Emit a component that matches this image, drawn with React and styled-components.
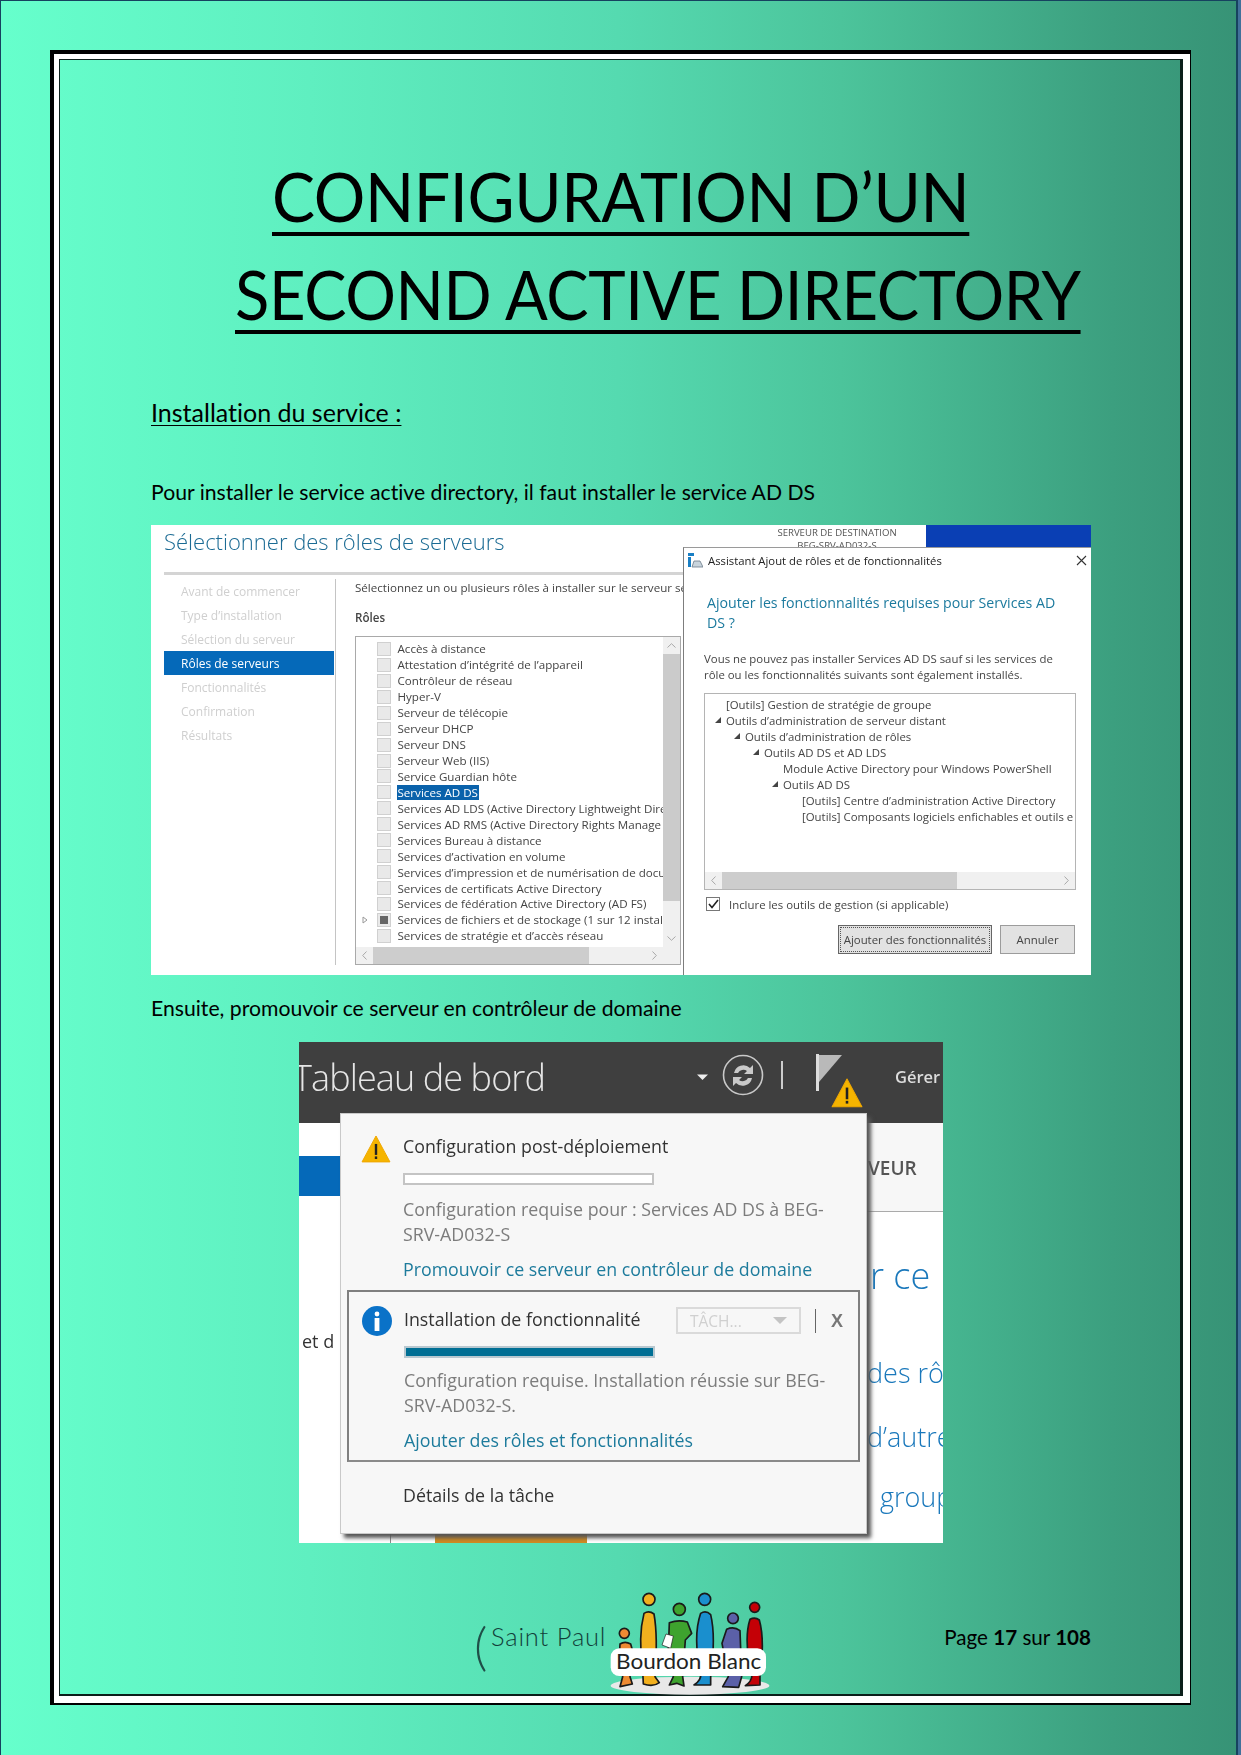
import React from "react";
import styled, { createGlobalStyle } from "styled-components";

const Global = createGlobalStyle`
  html, body { margin: 0; padding: 0; background: #41709a; }
  * { box-sizing: border-box; }
  #root { width: 1241px; height: 1755px; overflow: hidden; }
`;

const Sheet = styled.div`
  width: 1238px; height: 1755px;
  border-left: 1px solid #16425f; border-top: 1px solid #16425f; border-right: 2px solid #16425f;
  padding: 49px 0 0 49px;
  background: linear-gradient(90deg, #66ffcc 0%, #5fefc0 25%, #55dab0 50%, #4cc49b 68%, #3c9f7f 90%, #379376 100%);
  font-family: Lato, "Liberation Sans", sans-serif;
  font-variant-ligatures: none;
  color: #000;
`;
const FrameOuter = styled.div`
  width: 1141px; height: 1655px;
  border-style: solid; border-color: #000; border-width: 4px 1px 2px 4px;
`;
const FrameMid = styled.div`
  height: 100%;
  border-style: solid; border-color: #fff; border-width: 5px 7px 7px 5px;
`;
const FrameInner = styled.div`
  height: 100%;
  border-style: solid; border-color: #0b1f1a; border-width: 1px 3px 2px 1px;
  padding: 87px 89px 0 91px;
`;
const TitleLine = styled.h1`
  margin: 0; padding-left: ${p => p.$indent}px;
  font-weight: 400; font-size: 67px; line-height: 98px; white-space: nowrap;
`;
const TitleText = styled.span`
  display: inline-block; transform: scaleX(${p => p.$scale}); transform-origin: left center;
  letter-spacing: -0.4px;
  text-decoration: underline; text-decoration-thickness: 4px; text-underline-offset: 10px;
  text-decoration-skip-ink: none;
`;
const Subhead = styled.h2`
  margin: 54px 0 0; font-weight: 400; font-size: 25px; line-height: 30px;
  text-decoration: underline; text-decoration-thickness: 1px; text-underline-offset: 3px;
`;
const Para = styled.p`
  margin: ${p => p.$top}px 0 0; font-size: 21.2px; line-height: 24px; white-space: nowrap;
`;

/* first screenshot */
const ShotOne = styled.div`
  position: relative; margin-top: 21px; width: 940px; height: 450px; background: #fff; overflow: hidden;
  font-family: "Open Sans", sans-serif; font-size: 11.6px; color: #444; filter: blur(0.35px);
`;
const ShotHead = styled.div`display: flex; height: 47px; padding-left: 13px;`;
const ShotTitle = styled.div`
  font-size: 22px; font-weight: 300; color: #1b6b94; line-height: 32px; white-space: nowrap;
`;
const Destination = styled.div`
  margin-left: auto; width: 178px; padding-top: 1px; font-size: 9.6px; line-height: 13px; text-align: center; white-space: nowrap; color: #555;
`;
const BlueBand = styled.div`width: 165px; height: 22px; background: #0a3fb4;`;
const Rule = styled.div`height: 3px; margin: 0 0 0 13px; background: #d4d4d4;`;
const Columns = styled.div`display: flex; margin: 4px 0 0 13px;`;
const Nav = styled.div`width: 172px; height: 386px; border-right: 1px solid #c4c4c4; padding-right: 1px;`;
const NavItem = styled.div`
  height: 24px; padding: 2px 0 0 17px; line-height: 22px; font-size: 12px;
  color: ${p => (p.$active ? "#fff" : "#cfcfcf")}; background: ${p => (p.$active ? "#0569b9" : "transparent")};
`;
const Content = styled.div`padding-left: 19px; width: 345px;`;
const Intro = styled.div`line-height: 18px; white-space: nowrap; color: #444;`;
const RolesLabel = styled.div`margin-top: 12px; line-height: 18px; font-weight: 600; color: #444;`;
const ListBox = styled.div`
  margin-top: 9px; width: 326px; height: 329px; border: 1px solid #a9a9a9; display: grid;
  grid-template-columns: 1fr 17px; grid-template-rows: 1fr 17px;
`;
const ListRows = styled.div`padding-top: 4px; overflow: hidden;`;
const RoleRow = styled.div`display: flex; align-items: center; height: 15.95px; white-space: nowrap;`;
const Expander = styled.span`width: 20.5px; padding-left: 6px; display: flex; flex: none;`;
const Check = styled.span`
  flex: none; width: 14px; height: 14px; border: 1px solid #d0d0d0; background: #e9e9e9; margin-right: 6px; display: flex; align-items: center; justify-content: center;
  &::after { content: ""; width: ${p => (p.$partial ? 8 : 0)}px; height: ${p => (p.$partial ? 8 : 0)}px; background: #666; }
`;
const RoleText = styled.span`
  padding: 0 1px; color: ${p => (p.$sel ? "#fff" : "#444")}; background: ${p => (p.$sel ? "#0a62ab" : "transparent")};
`;
const VScroll = styled.div`background: #f0f0f0; display: flex; flex-direction: column; justify-content: space-between;`;
const VThumb = styled.div`height: 247px; margin-bottom: auto; background: #cbcbcb;`;
const HScroll = styled.div`background: #f0f0f0; display: flex; align-items: stretch; justify-content: space-between;`;
const HThumb = styled.div`width: ${p => p.$w}px; margin-right: auto; background: #cdcdcd;`;
const TreeScroll = styled(HScroll)`height: 17px; flex: none;`;
const Corner = styled.div`background: #f0f0f0;`;
const ChevronSlot = styled.span`
  flex: none; width: 17px; height: 17px; display: flex; align-items: center; justify-content: center;
  svg { transform: rotate(${p => p.$turn}deg); }
`;

/* dialog over the first screenshot */
const Dialog = styled.div`
  position: absolute; left: 532px; top: 22px; right: 0; bottom: 0; background: #fff;
  border-left: 1px solid #7d7d7d; border-top: 1px solid #9a9a9a; padding: 0 15px 0 20px;
`;
const DialogBar = styled.div`
  display: flex; align-items: center; gap: 5px; height: 24px; margin-left: -16px; margin-right: -11px; color: #222; font-size: 11.3px;
`;
const Close = styled.div`margin-left: auto; display: flex;`;
const DialogHeading = styled.div`
  margin-top: 21px; padding-left: 3px; font-size: 14.2px; line-height: 20px; color: #1c7a9e;
`;
const DialogText = styled.div`margin-top: 18px; line-height: 16px; font-size: 11.4px; color: #444; white-space: nowrap;`;
const Tree = styled.div`
  margin-top: 10px; height: 197px; border: 1px solid #b4b4b4; display: flex; flex-direction: column;
`;
const TreeRows = styled.div`flex: 1; padding-top: 2px; overflow: hidden;`;
const TreeRow = styled.div`
  display: flex; align-items: center; height: 16px; white-space: nowrap; margin-left: ${p => p.$level * 19}px; font-size: 11.4px; color: #444;
`;
const TreeArrow = styled.span`width: 21px; flex: none; padding-left: 9px; display: flex;`;
const DialogCheckRow = styled.div`display: flex; align-items: center; height: 16px; margin-top: 6px; padding-left: 2px; gap: 9px; font-size: 11.4px;`;
const TickBox = styled.span`
  width: 14px; height: 14px; border: 1px solid #777; display: flex; align-items: center; justify-content: center; background: #fff;
`;
const Buttons = styled.div`display: flex; justify-content: flex-end; gap: 8px; margin-top: 13px; padding-right: 1px;`;
const WinButton = styled.div`
  height: 29px; width: ${p => p.$w}px; display: flex; align-items: center; justify-content: center; white-space: nowrap;
  background: #e2e2e2; font-size: 11.4px; color: #444; border: 1px solid ${p => (p.$focus ? "#666" : "#9c9c9c")};
  outline: ${p => (p.$focus ? "1px dotted #555" : "none")}; outline-offset: -3px;
`;

/* second screenshot */
const ShotTwo = styled.div`
  position: relative; margin: 22px 0 0 148px; width: 644px; height: 501px; background: #fff; overflow: hidden;
  font-family: "Open Sans", sans-serif; filter: blur(0.35px);
`;
const DarkBar = styled.div`
  display: flex; align-items: center; height: 81px; background: #3f3f3f; color: #e4e4e4;
`;
const BoardTitle = styled.div`
  width: 397px; margin: 0 0 11px -6px; font-size: 36px; font-weight: 300; white-space: nowrap; color: #e6e6e6; letter-spacing: -0.9px;
`;
const BarIcons = styled.div`display: flex; align-items: center;`;
const Manage = styled.div`margin: 0 0 13px auto; font-size: 16.5px; font-weight: 600; white-space: nowrap; width: 48px; overflow: hidden; color: #ddd;`;
const Under = styled.div`display: flex; height: 420px;`;
const LeftSide = styled.div`width: 41px; padding-top: 33px; flex: none;`;
const BlueTab = styled.div`height: 40px; background: #0569b9;`;
const CutText = styled.div`margin-top: 133px; padding-left: 3px; line-height: 24px; font-size: 18px; color: #333; white-space: nowrap;`;
const MidSide = styled.div`flex: 1; display: flex; align-items: flex-end; padding-left: 50px;`;
const StripLine = styled.div`width: 1px; height: 9px; background: #888; margin-right: 44px;`;
const OrangeBar = styled.div`width: 152px; height: 9px; background: #cf8a22;`;
const RightSide = styled.div`width: 76px; flex: none; overflow: hidden;`;
const RightHead = styled.div`
  height: 89px; padding: 32px 0 0 1px; background: #f7f7f7; border-bottom: 1px solid #aaa;
  font-size: 19px; font-weight: 600; line-height: 26px; color: #555;
`;
const RightLink = styled.div`
  margin-top: ${p => p.$top}px; padding-left: ${p => p.$left}px; font-size: ${p => p.$size}px; line-height: ${p => p.$lh}px; font-weight: 300; color: #1a78bb; white-space: nowrap;
`;
const Popup = styled.div`
  position: absolute; left: 41px; top: 71px; width: 527px; height: 421px; background: #f7f7f7;
  border: 1px solid #c9c9c9; box-shadow: 4px 4px 4px #555; padding-top: 20px; color: #333; font-size: 17.8px;
`;
const Section = styled.div`position: relative; padding-left: 62px; padding-right: 10px;`;
const IconSlot = styled.div`position: absolute; left: ${p => p.$left}px; top: ${p => p.$top}px; display: flex;`;
const NoteTitle = styled.div`line-height: 24px; white-space: nowrap; color: #333; width: ${p => p.$w || "auto"};`;
const Progress = styled.div`
  margin-top: ${p => p.$top}px; width: 251px; height: 12px; border: 2px solid ${p => (p.$fill ? "#b8c8d0" : "#c4c4c4")}; background: ${p => (p.$fill ? "#006f94" : "#fff")};
`;
const NoteText = styled.div`margin-top: ${p => p.$top}px; line-height: 25px; color: #7c7c7c; white-space: pre;`;
const NoteLink = styled.div`margin-top: 10px; line-height: 24px; color: #1d7b9c; white-space: nowrap;`;
const OutlinedNote = styled.div`
  position: relative; margin: 9px 6px 0; height: 172px; border: 2px solid #7f7f7f; border-bottom-color: #8a8a8a; padding: 15px 0 0 55px;
`;
const NoteHead = styled.div`display: flex; align-items: flex-start; height: 27px;`;
const Combo = styled.div`
  width: 125px; height: 27px; border: 2px solid #dadada; display: flex; align-items: center; justify-content: space-between; padding: 0 12px; color: #d0d0d0; font-size: 15.5px;
`;
const ComboArrow = styled.span`width: 0; height: 0; border-left: 7px solid transparent; border-right: 7px solid transparent; border-top: 7px solid #c4c4c4;`;
const Bar = styled.span`width: 1px; height: 24px; background: #666; margin: 2px 0 0 14px;`;
const Dismiss = styled.span`margin-left: 15px; font-weight: 700; font-size: 18px; line-height: 28px; color: #777; font-family: "Liberation Sans", sans-serif;`;
const Details = styled.div`margin: 21px 0 0 62px; line-height: 24px; color: #333;`;

/* footer */
const Footer = styled.div`display: flex; height: 104px; margin-top: 47px; padding-left: 323px;`;
const Paren = styled.div`margin-top: 27px; width: 17px; font-size: 52px; line-height: 56px; font-weight: 300; color: #1f4f48;`;
const SaintPaul = styled.div`margin-top: 31px; width: 119px; font-size: 25.5px; line-height: 30px; font-weight: 300; color: #123f3a; letter-spacing: 0.8px; white-space: nowrap;`;
const LogoArt = styled.svg`display: block; flex: none;`;
const PageNum = styled.div`margin: 35px 0 0 auto; font-size: 20.6px; line-height: 24px; white-space: nowrap; b { font-weight: 700; }`;

const nav = ["Avant de commencer", "Type d’installation", "Sélection du serveur", "Rôles de serveurs", "Fonctionnalités", "Confirmation", "Résultats"];
const roles = ["Accès à distance", "Attestation d’intégrité de l’appareil", "Contrôleur de réseau", "Hyper-V", "Serveur de télécopie", "Serveur DHCP", "Serveur DNS", "Serveur Web (IIS)", "Service Guardian hôte", "Services AD DS", "Services AD LDS (Active Directory Lightweight Dire", "Services AD RMS (Active Directory Rights Manage", "Services Bureau à distance", "Services d’activation en volume", "Services d’impression et de numérisation de docur", "Services de certificats Active Directory", "Services de fédération Active Directory (AD FS)", "Services de fichiers et de stockage (1 sur 12 install", "Services de stratégie et d’accès réseau"];
const tree = [
  [0, false, "[Outils] Gestion de stratégie de groupe"],
  [0, true, "Outils d’administration de serveur distant"],
  [1, true, "Outils d’administration de rôles"],
  [2, true, "Outils AD DS et AD LDS"],
  [3, false, "Module Active Directory pour Windows PowerShell"],
  [3, true, "Outils AD DS"],
  [4, false, "[Outils] Centre d’administration Active Directory"],
  [4, false, "[Outils] Composants logiciels enfichables et outils e"],
];

const Warn = ({ size = 30 }) => (
  <svg width={size} height={size * 0.93} viewBox="0 0 30 28">
    <path d="M15 1 L29 27 L1 27 Z" fill="#f5b400" stroke="#f0a800" strokeLinejoin="round" />
    <rect x="13.8" y="9" width="2.4" height="11" fill="#222" />
    <rect x="13.8" y="21.5" width="2.4" height="2.6" fill="#222" />
  </svg>
);
const Info = () => (
  <svg width="30" height="30" viewBox="0 0 30 30">
    <circle cx="15" cy="15" r="15" fill="#0a72c8" />
    <circle cx="15" cy="8" r="2.4" fill="#fff" />
    <rect x="12.6" y="12" width="4.8" height="13" fill="#fff" />
  </svg>
);
const Arrow = () => (
  <svg width="8" height="8" viewBox="0 0 8 8"><path d="M7 1 V7 H1 Z" fill="#444" /></svg>
);
const Tri = () => (
  <svg width="6" height="8" viewBox="0 0 6 8"><path d="M1 1 L5 4 L1 7 Z" fill="none" stroke="#999" /></svg>
);
const Chevron = ({ turn }) => (
  <ChevronSlot $turn={turn}>
    <svg width="5" height="9" viewBox="0 0 5 9"><path d="M4.5 0.5 L0.7 4.5 L4.5 8.5" fill="none" stroke="#a8a8a8" strokeWidth="1" /></svg>
  </ChevronSlot>
);

export default function App() {
  return (
    <>
      <Global />
      <Sheet>
        <FrameOuter><FrameMid><FrameInner>
          <TitleLine $indent={121}><TitleText $scale={0.962}>CONFIGURATION D’UN</TitleText></TitleLine>
          <TitleLine $indent={84}><TitleText $scale={0.945}>SECOND ACTIVE DIRECTORY</TitleText></TitleLine>
          <Subhead>Installation du service :</Subhead>
          <Para $top={53}>Pour installer le service active directory, il faut installer le service AD DS</Para>
          <ShotOne>
            <ShotHead>
              <ShotTitle>Sélectionner des rôles de serveurs</ShotTitle>
              <Destination>SERVEUR DE DESTINATION<br />BEG-SRV-AD032-S</Destination>
              <BlueBand />
            </ShotHead>
            <Rule />
            <Columns>
              <Nav>{nav.map((n, i) => <NavItem key={n} $active={i === 3}>{n}</NavItem>)}</Nav>
              <Content>
                <Intro>Sélectionnez un ou plusieurs rôles à installer sur le serveur sél</Intro>
                <RolesLabel>Rôles</RolesLabel>
                <ListBox>
                  <ListRows>
                    {roles.map((r, i) => (
                      <RoleRow key={r}>
                        <Expander>{i === 17 ? <Tri /> : null}</Expander>
                        <Check $partial={i === 17} />
                        <RoleText $sel={i === 9}>{r}</RoleText>
                      </RoleRow>
                    ))}
                  </ListRows>
                  <VScroll>
                    <Chevron turn={90} />
                    <VThumb />
                    <Chevron turn={-90} />
                  </VScroll>
                  <HScroll>
                    <Chevron turn={0} />
                    <HThumb $w={216} />
                    <Chevron turn={180} />
                  </HScroll>
                  <Corner />
                </ListBox>
              </Content>
            </Columns>
            <Dialog>
              <DialogBar>
                <svg width="15" height="15" viewBox="0 0 15 15">
                  <rect x="0" y="0" width="6" height="3" fill="#1a7fc4" />
                  <rect x="0" y="4" width="3" height="10" fill="#1a7fc4" />
                  <path d="M4 14 L6 8 H12 L15 14 Z" fill="#c9d4dc" stroke="#6a7a88" strokeWidth="0.8" />
                </svg>
                Assistant Ajout de rôles et de fonctionnalités
                <Close>
                  <svg width="11" height="11" viewBox="0 0 11 11"><path d="M1 1 L10 10 M10 1 L1 10" stroke="#333" strokeWidth="1.1" /></svg>
                </Close>
              </DialogBar>
              <DialogHeading>Ajouter les fonctionnalités requises pour Services AD DS ?</DialogHeading>
              <DialogText>Vous ne pouvez pas installer Services AD DS sauf si les services de<br />rôle ou les fonctionnalités suivants sont également installés.</DialogText>
              <Tree>
                <TreeRows>
                  {tree.map(([lvl, arrow, label]) => (
                    <TreeRow key={label} $level={lvl}>
                      <TreeArrow>{arrow ? <Arrow /> : null}</TreeArrow>
                      {label}
                    </TreeRow>
                  ))}
                </TreeRows>
                <TreeScroll>
                  <Chevron turn={0} />
                  <HThumb $w={235} />
                  <Chevron turn={180} />
                </TreeScroll>
              </Tree>
              <DialogCheckRow>
                <TickBox>
                  <svg width="11" height="10" viewBox="0 0 11 10"><path d="M1 5 L4 8.5 L10 1" fill="none" stroke="#222" strokeWidth="1.6" /></svg>
                </TickBox>
                Inclure les outils de gestion (si applicable)
              </DialogCheckRow>
              <Buttons>
                <WinButton $w={154} $focus>Ajouter des fonctionnalités</WinButton>
                <WinButton $w={75}>Annuler</WinButton>
              </Buttons>
            </Dialog>
          </ShotOne>
          <Para $top={21}>Ensuite, promouvoir ce serveur en contrôleur de domaine</Para>
          <ShotTwo>
            <DarkBar>
              <BoardTitle>Tableau de bord</BoardTitle>
              <BarIcons>
                <svg width="160" height="60" viewBox="0 0 160 60">
                  <path d="M7 21.5 H18 L12.5 27 Z" fill="#eee" />
                  <circle cx="53" cy="22" r="19.5" fill="none" stroke="#c9c9c9" strokeWidth="1.6" />
                  <path d="M44 20 a9.5 9.5 0 0 1 16 -5 l3 -3 v9 h-9 l3 -3 a6 6 0 0 0 -9 2 Z" fill="#c9c9c9" />
                  <path d="M62 25 a9.5 9.5 0 0 1 -16 5 l-3 3 v-9 h9 l-3 3 a6 6 0 0 0 9 -2 Z" fill="#c9c9c9" />
                  <rect x="91" y="8" width="2" height="28" fill="#ccc" />
                  <rect x="126" y="1" width="3" height="37" fill="#ddd" />
                  <path d="M129 2 H152 L129 29 Z" fill="#b9b9b9" />
                </svg>
              </BarIcons>
              <Manage>Gérer</Manage>
            </DarkBar>
            <Under>
              <LeftSide>
                <BlueTab />
                <CutText>et d</CutText>
              </LeftSide>
              <MidSide>
                <StripLine />
                <OrangeBar />
              </MidSide>
              <RightSide>
                <RightHead>VEUR</RightHead>
                <RightLink $top={41} $left={3} $size={36} $lh={46}>r ce</RightLink>
                <RightLink $top={53} $left={0} $size={27} $lh={42}>des rôles</RightLink>
                <RightLink $top={22} $left={0} $size={27} $lh={42}>d’autres</RightLink>
                <RightLink $top={18} $left={13} $size={27} $lh={42}>group</RightLink>
              </RightSide>
            </Under>
            <IconSlot $left={532} $top={36}><Warn size={32} /></IconSlot>
            <Popup>
              <Section>
                <IconSlot $left={20} $top={1}><Warn /></IconSlot>
                <NoteTitle>Configuration post-déploiement</NoteTitle>
                <Progress $top={15} />
                <NoteText $top={12}>{"Configuration requise pour : Services AD DS à BEG-\nSRV-AD032-S"}</NoteText>
                <NoteLink>Promouvoir ce serveur en contrôleur de domaine</NoteLink>
              </Section>
              <OutlinedNote>
                <IconSlot $left={13} $top={14}><Info /></IconSlot>
                <NoteHead>
                  <NoteTitle $w="272px">Installation de fonctionnalité</NoteTitle>
                  <Combo>TÂCH...<ComboArrow /></Combo>
                  <Bar />
                  <Dismiss>X</Dismiss>
                </NoteHead>
                <Progress $top={12} $fill />
                <NoteText $top={10}>{"Configuration requise. Installation réussie sur BEG-\nSRV-AD032-S."}</NoteText>
                <NoteLink>Ajouter des rôles et fonctionnalités</NoteLink>
              </OutlinedNote>
              <Details>Détails de la tâche</Details>
            </Popup>
          </ShotTwo>
          <Footer>
            <Paren>(</Paren>
            <SaintPaul>Saint Paul</SaintPaul>
            <LogoArt width="160" height="105" viewBox="450 60 480 315">
              <ellipse cx="690" cy="347" rx="238" ry="27" fill="#e8e8e8" />
              <g stroke="#1a1a1a" strokeWidth="5" strokeLinejoin="round">
                <circle cx="493" cy="190" r="15" fill="#ee8a33" />
                <path d="M480 222 Q495 212 512 222 L520 250 L510 320 L517 342 L480 350 L488 320 L478 260 Z" fill="#ee8a33" />
                <circle cx="567" cy="88" r="18" fill="#f2b01e" />
                <path d="M552 130 Q567 120 582 132 Q594 200 585 320 L598 338 Q580 352 550 342 L548 300 Q534 200 552 130 Z" fill="#f2b01e" />
                <circle cx="658" cy="118" r="18" fill="#3ea32e" />
                <path d="M628 158 Q655 148 682 156 L695 190 L676 210 L668 320 L672 348 L650 340 L628 345 L640 320 L625 240 Z" fill="#3ea32e" />
                <path d="M618 192 L640 198 L632 235 L606 225 Z" fill="#fff" strokeWidth="2" />
                <circle cx="734" cy="88" r="18" fill="#1a8fce" />
                <path d="M722 130 Q738 120 752 134 Q768 200 752 320 L752 345 L702 345 Q725 330 722 310 Q698 200 722 130 Z" fill="#1a8fce" />
                <circle cx="819" cy="145" r="16" fill="#5b60a8" />
                <path d="M800 178 Q822 168 840 182 L845 320 L836 352 L788 350 L805 320 L786 220 Z" fill="#5b60a8" />
                <circle cx="884" cy="112" r="15" fill="#c40006" />
                <path d="M870 148 Q885 140 898 150 Q915 210 900 320 L900 345 L856 347 Q875 335 876 315 Q850 210 870 148 Z" fill="#c40006" />
              </g>
              <rect x="452" y="235" width="466" height="83" rx="26" fill="#fff" />
              <text x="468" y="298" fontFamily="Lato, sans-serif" fontWeight="400" fontSize="66" fill="#222" textLength="436" lengthAdjust="spacingAndGlyphs">Bourdon Blanc</text>
            </LogoArt>
            <PageNum>Page <b>17</b> sur <b>108</b></PageNum>
          </Footer>
        </FrameInner></FrameMid></FrameOuter>
      </Sheet>
    </>
  );
}
